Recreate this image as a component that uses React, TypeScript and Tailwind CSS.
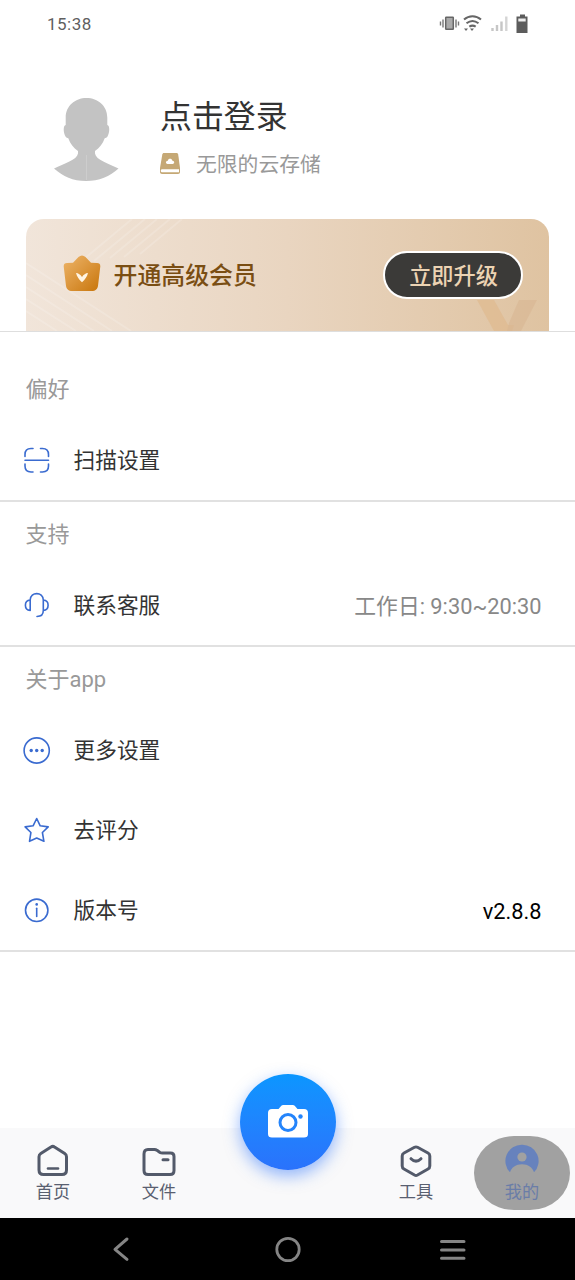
import type { ReactNode } from "react";

function StatusBar() {
  return (
    <div className="flex h-12 items-center justify-between pl-[47px] pr-[46px]">
      <span className="pt-px text-[17px] tracking-[0.5px] text-[#5f5f5f]">15:38</span>
      <svg width="90" height="24" viewBox="0 0 90 24" fill="none">
        <rect x="6.700" y="5.200" width="7.600" height="12" rx="0.500" fill="#aaa" stroke="#666" strokeWidth="1.500" />
        <path d="M4 7.500v8M1.500 9.500v4M17 7.500v8M19.500 9.500v4" stroke="#777" strokeWidth="1.400" />
        <path d="M25 7.500c5-4.500 12-4.500 17 0M27.500 11.300c3.800-3 8.200-3 12 0M30.300 14.700c2.200-1.500 4.200-1.500 6.400 0" stroke="#666" strokeWidth="2" />
        <path d="M25 16.500h4l-2 2.500zM31 16.500h4l-2 2.500z" fill="#666" />
        <path d="M53.500 16v3M58 13v6M62.500 9.500v9.500" stroke="#c6c6c6" strokeWidth="2.400" />
        <path d="M67.300 4.500V19" stroke="#d4d4d4" strokeWidth="2.400" />
        <path d="M81 2.500h5v2h2.500V21h-11V4.500H81z" fill="#5c5c5c" />
        <path d="M79.300 6.500h7.400v3h-7.400z" fill="#eee" />
      </svg>
    </div>
  );
}

function Profile() {
  return (
    <div className="flex h-[171px] pl-[53px] pt-[49px]">
      <svg width="66" height="86" viewBox="0 0 66 86" fill="#c3c3c3" className="shrink-0">
        <path d="M33.500 1C22 1 12.700 9 12.700 20.500V28c-2.600.3-2.500 7.500-.2 11.500.8 1.200 1.800 1.600 2.800 1.800 2 5.500 5.200 9.700 9.700 12.700v2.500C24 63 11 66.500 1 71.500 10 79.500 20 84 33 84s24-4.500 32.500-12.500C55.500 66.500 43 63 42 56.500V54c4.500-3 7.700-7.200 9.700-12.700 1-.2 2-.6 2.800-1.800 2.300-4 2.400-11.200-.2-11.500v-7.500C54.300 9 45 1 33.500 1z" />
        <path d="M33.500 58v25" stroke="#cdcdcd" strokeWidth="1" />
      </svg>
      <div className="ml-[41px] flex flex-col pt-[2px]">
        <div className="h-[40px] text-[31.9px] leading-[36px] text-[#333]">点击登录</div>
        <div className="mt-[12px] flex h-[28px] items-center">
          <svg width="20" height="21" viewBox="0 0 20 21" className="-mt-1">
            <path d="M4 0h12.500c1 0 1.500.6 1.700 1.500L20 15v4c0 1.200-.7 2-2 2H2c-1.200 0-2-.8-2-2v-4L2.300 1.500C2.500.6 3 0 4 0z" fill="#c5a875" />
            <path d="M1.800 16.300H19v3H1.800c-1.400-.5-1.400-2.500 0-3z" fill="#fff" />
            <path d="M7.500 11c-2.200-.3-2-3.200.3-3.200.5-2.600 4-2.600 4.600 0 2.300 0 2.500 2.900.3 3.200z" fill="#fff" />
          </svg>
          <span className="ml-4 text-[20.8px] leading-7 text-[#999]">无限的云存储</span>
        </div>
      </div>
    </div>
  );
}

function MemberBanner() {
  return (
    <div className="relative mx-[26px] flex h-28 items-center overflow-hidden rounded-t-[18px] bg-linear-to-r from-[#f1e5da] via-[#e9d5c0] to-[#dfc3a1] pl-[38px] pr-[26px]">
      <svg className="absolute inset-0" width="524" height="112" viewBox="0 0 524 112" fill="none">
        <path d="M0 44l105 68M0 56l86 56M0 68l68 44M0 80l50 32M0 92l31 20M58 40l48-40M68 42l51-42M84 39l47-39M98 38l46-38M114 35l42-35" stroke="#fff" strokeOpacity=".16" strokeWidth="2" />
        <path d="M451 81h17l14 25h6l-2 6h-18z" fill="#dfb78a" fillOpacity=".6" />
        <path d="M493 81h18l-16 31h-14l2-8z" fill="#d8b793" fillOpacity=".65" />
      </svg>
      <svg className="relative -ml-px -mt-1 shrink-0" width="38" height="38" viewBox="0 0 38 38">
        <defs>
          <linearGradient id="crown" x1="0" y1="0" x2="1" y2="1">
            <stop stopColor="#eeb56a" />
            <stop offset="1" stopColor="#c8750b" />
          </linearGradient>
        </defs>
        <path d="M4 9l6-.2L15.500 3q3.500-3.200 7 0L28 8.800l6 .2q3.500 0 3.300 3.500l-2.200 18.500c-.4 4-2.500 6-6.500 6H9.400c-4 0-6.100-2-6.500-6L.7 12.500Q.5 9 4 9z" fill="url(#crown)" />
        <path d="M13 19c2.500.2 4.300 1.500 6 4 1.700-2.500 3.500-3.800 6-4-1 4-3 6.500-6 9.200-3-2.700-5-5.200-6-9.200z" fill="#fff4e3" />
      </svg>
      <span className="relative ml-[12.500px] mt-[2px] text-[23.9px] font-medium leading-8 text-[#7a4e13]">开通高级会员</span>
      <button className="relative ml-auto flex h-12 w-[140px] items-center justify-center rounded-full border-2 border-white bg-[#3b3a38] text-[22.2px] font-medium leading-8 text-[#ecd3b3]">
        <span className="pl-px pt-px">立即升级</span>
      </button>
    </div>
  );
}

function SectionTitle({ children }: { children: ReactNode }) {
  return <div className="flex h-[63px] items-center pl-[25.500px] pt-[2px] text-[22px] leading-8 text-[#999]">{children}</div>;
}

function Row({ icon, label, value }: { icon: ReactNode; label: string; value?: ReactNode }) {
  return (
    <div className="flex h-20 items-center pl-[22px] pr-[33.500px]">
      <svg width="30" height="30" viewBox="0 0 30 30" fill="none" stroke="#3a6bd0" strokeWidth="1.600" strokeLinecap="round" strokeLinejoin="round">
        {icon}
      </svg>
      <span className="ml-[21.500px] pt-[2px] text-[21.700px] leading-8 text-[#333]">{label}</span>
      {value}
    </div>
  );
}

function Tab({ icon, label }: { icon: ReactNode; label: string }) {
  return (
    <div className="flex w-[106px] flex-col items-center pt-4 text-[#596070]">
      <svg width="34" height="34" viewBox="0 0 34 34" fill="none" stroke="#535a6a" strokeWidth="3" strokeLinecap="round" strokeLinejoin="round">
        {icon}
      </svg>
      <span className="mt-[2px] text-[17.200px] leading-6">{label}</span>
    </div>
  );
}

function TabBar() {
  return (
    <div className="relative flex h-[90px] justify-between bg-[#f9f9fa]">
      <div className="flex">
        <Tab
          label="首页"
          icon={
            <>
              <path d="M15 3L4.800 9.500Q3 10.700 3 12.700v13.300Q3 30.500 7.500 30.500h18.500q4.500 0 4.500-4.500V12.700q0-2-1.800-3.200L18.500 3q-1.750-1.200-3.500 0z" />
              <path d="M12 24.500h10" strokeWidth="2.600" />
            </>
          }
        />
        <Tab
          label="文件"
          icon={
            <>
              <path d="M2 10Q2 5.500 6 5.500h6.500q1.500 0 2.500.8l3 2.200q1 .6 2.500.6h8q3.500 0 3.500 3.500V26.500q0 4-4 4H6q-4 0-4-4z" />
              <path d="M21 15.800h5" />
            </>
          }
        />
      </div>
      <div className="flex">
        <Tab
          label="工具"
          icon={
            <>
              <path d="M15.500 3.300L5 9q-1.800 1-1.800 3v10q0 2 1.800 3l10.500 6q1.500.8 3 0l10.500-6q1.800-1 1.800-3V12q0-2-1.800-3L18.500 3.300q-1.500-.8-3 0z" />
              <path d="M12 14.700q5 5 10 0" />
            </>
          }
        />
        <div className="relative w-[106px]">
          <div className="absolute left-[5px] top-2 h-[74px] w-24 rounded-[40px/37px] bg-[#a1a1a1]" />
          <div className="relative flex flex-col items-center pt-4 text-[#6a7da8]">
            <svg width="34" height="34" viewBox="0 0 34 34">
              <path d="M17 .8a16.200 16.200 0 0 1 12 27.500c-1.500-5-6-8.100-12-8.100s-10.500 3.100-12 8.100A16.200 16.200 0 0 1 17 .8z" fill="#6782bd" />
              <circle cx="17" cy="13" r="4.600" fill="#a1a1a1" />
            </svg>
            <span className="mt-[2px] text-[17.200px] leading-6">我的</span>
          </div>
        </div>
      </div>
      <button className="absolute -top-[54px] left-[240px] flex h-24 w-24 items-center justify-center rounded-full bg-linear-to-b from-[#0a96ff] to-[#2a72fc] shadow-[0_6px_16px_rgba(42,114,252,0.5)]">
        <svg width="42" height="34" viewBox="0 0 42 34" className="-mt-0.5">
          <path d="M5 5h6.500l2.800-3.300Q15 1 16.200 1h9.600q1.200 0 1.900.7L30.500 5H37q4 0 4 4v21q0 3.500-4 3.500H5q-4 0-4-3.500V9q0-4 4-4z" fill="#fff" />
          <circle cx="21" cy="18.500" r="8" fill="none" stroke="#2484fb" strokeWidth="3" />
          <circle cx="33.500" cy="12.500" r="2.200" fill="#2484fb" />
        </svg>
      </button>
    </div>
  );
}

function SystemNav() {
  return (
    <div className="flex h-[62px] items-center justify-between bg-black px-[107px]">
      <svg width="28" height="28" viewBox="0 0 28 28" fill="none" stroke="#858585" strokeWidth="3" strokeLinecap="round" strokeLinejoin="round">
        <path d="M20 4L8 14.300 20 24.300" />
      </svg>
      <svg width="28" height="28" viewBox="0 0 28 28" fill="none" stroke="#858585" strokeWidth="2.800">
        <circle cx="14" cy="14.500" r="11.200" />
      </svg>
      <svg width="28" height="28" viewBox="0 0 28 28" fill="none" stroke="#858585" strokeWidth="3" strokeLinecap="round">
        <path d="M1.500 6.500h22.500M1.500 14.900h22.500M1.500 23.300h22.500" />
      </svg>
    </div>
  );
}

export default function App() {
  return (
    <div className="flex h-[1280px] w-[575px] flex-col overflow-hidden bg-white font-[Roboto,'Noto_Sans_CJK_SC',sans-serif]">
      <StatusBar />
      <Profile />
      <MemberBanner />
      <section className="border-t border-[#dedede] pt-[25px]">
        <SectionTitle>偏好</SectionTitle>
        <Row
          label="扫描设置"
          icon={<path d="M3 11.500V9.500Q3 3.500 9 3.500h2M18.500 3.500h2Q26.500 3.500 26.500 9.500v2M26.500 19v2q0 6-6 6h-2M11 27H9Q3 27 3 21V19M3 15.200h23.500" />}
        />
      </section>
      <section className="border-t-2 border-[#e1e1e1]">
        <SectionTitle>支持</SectionTitle>
        <Row
          label="联系客服"
          icon={<path d="M8.200 10v10.500C1.800 20 1.800 10.500 8.200 10zM8.200 10C8.500 1.500 21 1.500 21.300 10v10.500C27.700 20 27.700 10.500 21.300 10M21.300 20.500q0 6-6.300 6" />}
          value={<span className="ml-auto pt-[4px] text-[21.800px] leading-8 text-[#888]">工作日: 9:30~20:30</span>}
        />
      </section>
      <section className="border-y-2 border-[#e1e1e1]">
        <SectionTitle>关于app</SectionTitle>
        <Row
          label="更多设置"
          icon={
            <>
              <circle cx="14.700" cy="15.500" r="12.600" />
              <g fill="#3a6bd0" stroke="none">
                <circle cx="9.200" cy="15.500" r="1.700" />
                <circle cx="14.700" cy="15.500" r="1.700" />
                <circle cx="20.200" cy="15.500" r="1.700" />
              </g>
            </>
          }
        />
        <Row
          label="去评分"
          icon={<path d="M14.700 3.500l3.500 7.300 8 1.100-5.800 5.600 1.500 8.800-7.200-3.200-7.200 3.200L8.900 17.500 3.100 11.900l8-1.100z" />}
        />
        <Row
          label="版本号"
          icon={
            <>
              <circle cx="14.700" cy="15.300" r="11.200" />
              <path d="M14.700 13.300v8.200" />
              <circle cx="14.700" cy="9.400" r="1.300" fill="#3a6bd0" stroke="none" />
            </>
          }
          value={<span className="ml-auto pt-[4px] text-[21.800px] leading-8 text-black">v2.8.8</span>}
        />
      </section>
      <div className="flex-1" />
      <TabBar />
      <SystemNav />
    </div>
  );
}
